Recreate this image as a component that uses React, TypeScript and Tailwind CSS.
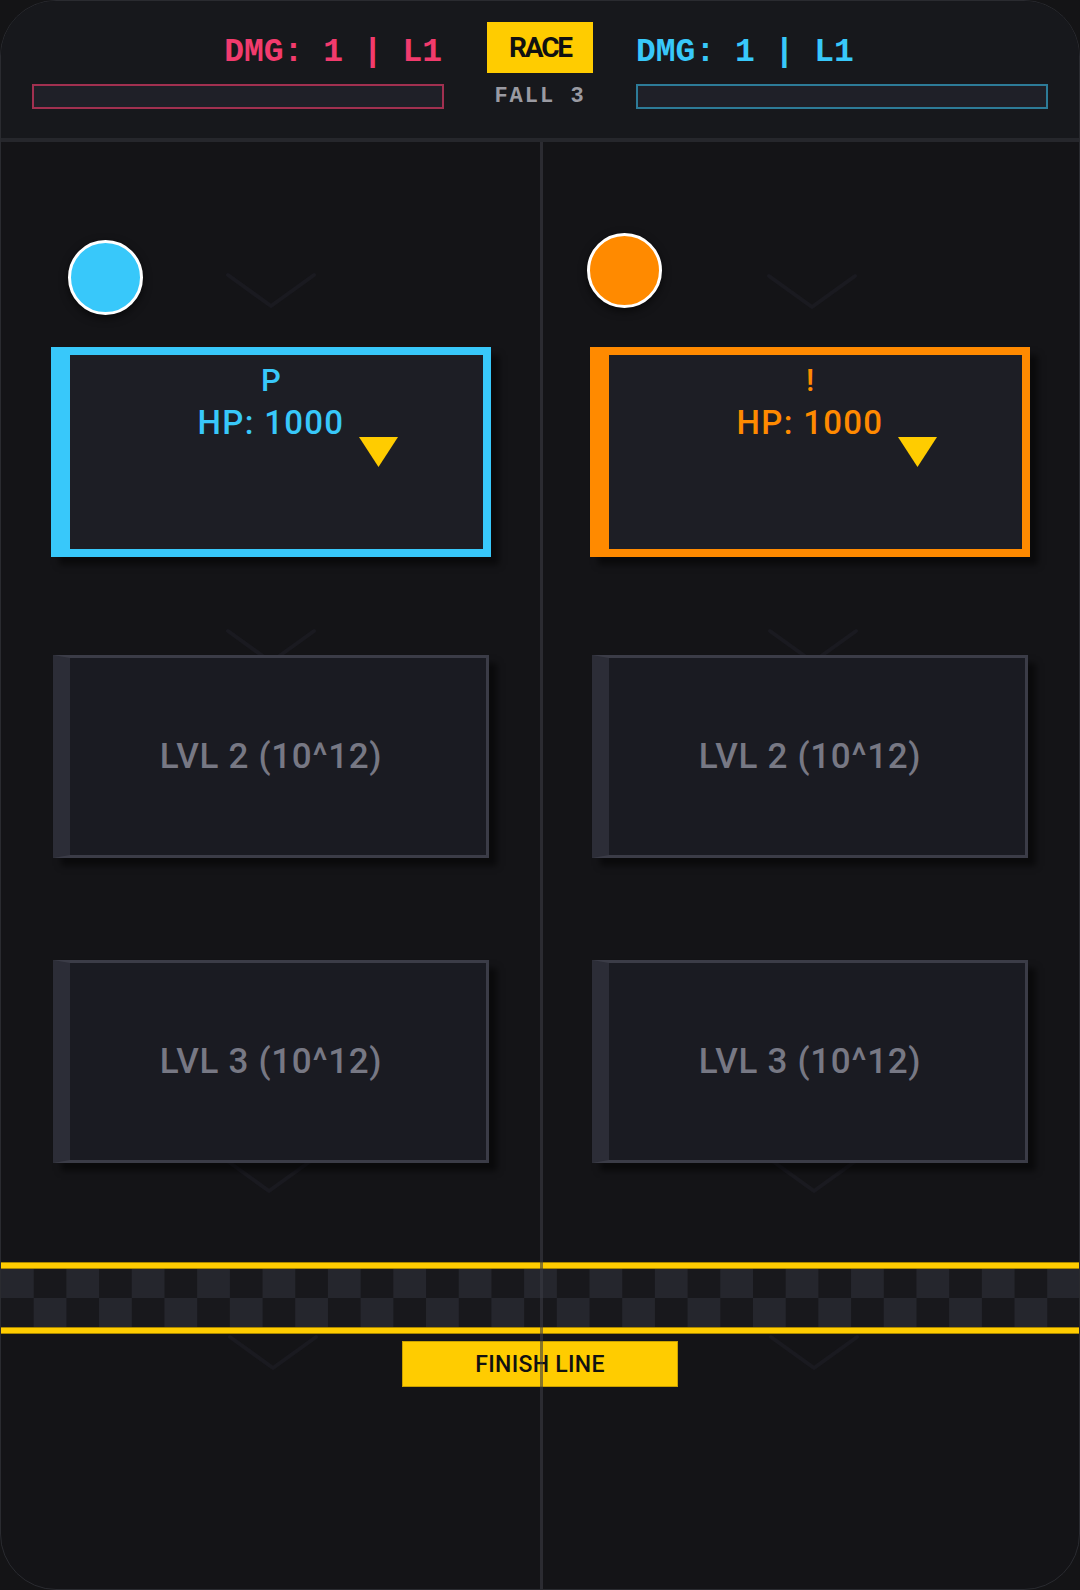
import type { FC } from 'react';

const Chevron: FC<{ className: string }> = ({ className }) => (
  <svg className={className} width="92" height="38" viewBox="0 0 92 38" fill="none">
    <polyline points="3,3 46,34 89,3" stroke="#1a1a20" strokeWidth="4" strokeLinecap="round" strokeLinejoin="round" />
  </svg>
);

const Marker: FC = () => (
  <svg className="absolute left-[289px] top-[82px]" width="39" height="30" viewBox="0 0 39 30">
    <polygon points="0,0 39,0 19.5,30" fill="#ffcc00" />
  </svg>
);

const ActiveCard: FC<{ label: string; tone: 'cyan' | 'orange' }> = ({ label, tone }) => (
  <div
    className={
      tone === 'cyan'
        ? 'relative ml-[50px] w-[440px] h-[210px] border-[8px] border-l-[19px] border-[#38c8fa] bg-[#1d1e25] shadow-[8px_8px_6px_rgba(0,0,0,0.5)]'
        : 'relative ml-[50px] w-[440px] h-[210px] border-[8px] border-l-[19px] border-[#ff8a00] bg-[#1d1e25] shadow-[8px_8px_6px_rgba(0,0,0,0.5)]'
    }
  >
    <div
      className={
        tone === 'cyan'
          ? "flex flex-col items-center pt-[11px] pr-[11px] font-['Roboto',sans-serif] font-medium text-[#38c8fa]"
          : "flex flex-col items-center pt-[11px] pr-[11px] font-['Roboto',sans-serif] font-medium text-[#ff8a00]"
      }
    >
      <span className="text-[31px] leading-[30px]">{label}</span>
      <span className="mt-[10px] text-[33px] leading-[33px] tracking-[1.3px]">HP: 1000</span>
    </div>
    <Marker />
  </div>
);

const LockedCard: FC<{ text: string; className?: string }> = ({ text, className }) => (
  <div
    className={
      'relative ml-[52px] w-[436px] h-[203px] flex items-center justify-center pr-[14px] border-[3px] border-l-[17px] border-[#3b3c47] border-l-[#2c2d37] bg-[#1a1b22] shadow-[8px_8px_6px_rgba(0,0,0,0.5)] ' +
      (className ?? '')
    }
  >
    <span className="font-['Roboto',sans-serif] font-medium text-[35px] leading-[35px] tracking-[0.7px] text-[#777884]">{text}</span>
  </div>
);

const Lane: FC<{ side: 'left' | 'right' }> = ({ side }) => (
  <div className="w-[540px] h-[1120px] flex flex-col">
    <div className={side === 'left' ? 'h-[205px] pt-[98px] pl-[67px]' : 'h-[205px] pt-[91px] pl-[47px]'}>
      <div
        className={
          side === 'left'
            ? 'w-[75px] h-[75px] rounded-full border-[3px] border-white bg-[#38c8fa] shadow-[0_3px_8px_rgba(0,0,0,0.6)]'
            : 'w-[75px] h-[75px] rounded-full border-[3px] border-white bg-[#ff8a00] shadow-[0_3px_8px_rgba(0,0,0,0.6)]'
        }
      />
    </div>
    <ActiveCard label={side === 'left' ? 'P' : '!'} tone={side === 'left' ? 'cyan' : 'orange'} />
    <LockedCard text="LVL 2 (10^12)" className="mt-[98px]" />
    <LockedCard text="LVL 3 (10^12)" className="mt-[102px]" />
  </div>
);

export default function App() {
  return (
    <div className="w-[1080px] h-[1590px] bg-[#141416]">
      <div className="w-[1080px] h-[1590px] flex flex-col overflow-hidden rounded-[56px] border border-[#2a2b30] bg-[#141417]">
        {/* score header */}
        <header className="h-[141px] shrink-0 grid grid-cols-[412px_1fr_412px] px-[31px] bg-[#17181c] border-b-4 border-[#26272c]">
          <div className="pt-[36px] flex flex-col items-end">
            <span className="mr-[2px] font-['Liberation_Mono',monospace] font-bold text-[33px] leading-[32px] text-[#f23b6d] whitespace-pre">
              DMG: 1 | L1
            </span>
            <div className="mt-[15px] w-[412px] h-[25px] border-2 border-[#a13050] bg-[#1f2028]" />
          </div>
          <div className="pt-[21px] flex flex-col items-center">
            <div className="w-[106px] h-[51px] flex items-center justify-center bg-[#ffcc00]">
              <span className="font-['Roboto',sans-serif] font-bold text-[28px] leading-none tracking-[-2.2px] text-[#111]">RACE</span>
            </div>
            <span className="mt-[13px] font-['Liberation_Mono',monospace] font-bold text-[22px] leading-[22px] tracking-[2px] text-[#9a9aa2] whitespace-pre">
              FALL 3
            </span>
          </div>
          <div className="pt-[36px] flex flex-col items-start">
            <span className="font-['Liberation_Mono',monospace] font-bold text-[33px] leading-[32px] text-[#38c8fa] whitespace-pre">
              DMG: 1 | L1
            </span>
            <div className="mt-[15px] w-[412px] h-[25px] border-2 border-[#2d7b98] bg-[#1f2028]" />
          </div>
        </header>

        {/* track */}
        <main className="relative flex-1 flex flex-col">
          <Chevron className="absolute left-[224px] top-[130px]" />
          <Chevron className="absolute left-[224px] top-[486px]" />
          <Chevron className="absolute left-[222px] top-[1015px]" />
          <Chevron className="absolute left-[226px] top-[1192px]" />
          <Chevron className="absolute left-[765px] top-[131px]" />
          <Chevron className="absolute left-[766px] top-[486px]" />
          <Chevron className="absolute left-[767px] top-[1015px]" />
          <Chevron className="absolute left-[767px] top-[1192px]" />

          <div className="relative flex">
            <Lane side="left" />
            <Lane side="right" />
          </div>

          <div className="relative h-[7px] bg-[#ffcc00] border-y border-[#a88600]" />
          <div className="relative h-[58px] bg-[repeating-conic-gradient(#18181c_0_25%,#25262d_0_50%)] bg-size-[65.4px_58px]" />
          <div className="relative h-[7px] bg-[#ffcc00] border-y border-[#a88600]" />

          <div className="relative mt-[7px] mx-auto w-[276px] h-[46px] flex items-center justify-center bg-[#ffcc00] border border-[#c9a000]">
            <span className="font-['Roboto',sans-serif] font-medium text-[23px] leading-none tracking-[0.3px] text-[#111]">FINISH LINE</span>
          </div>

          <div className="absolute left-[539px] top-0 bottom-0 w-[3px] bg-[#3a3b42]/60 z-20" />
        </main>
      </div>
    </div>
  );
}
